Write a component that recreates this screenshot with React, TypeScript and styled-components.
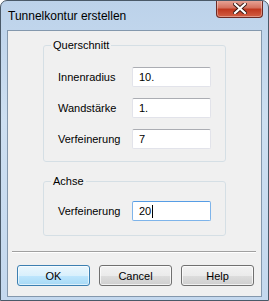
import React from 'react';
import styled, { createGlobalStyle } from 'styled-components';

const GlobalStyle = createGlobalStyle`
  html, body {
    margin: 0;
    padding: 0;
    background: #ffffff;
  }
  * {
    box-sizing: border-box;
  }
`;

const Window = styled.div`
  width: 269px;
  height: 301px;
  display: flex;
  flex-direction: column;
  border: 1px solid #4a5968;
  border-radius: 7px 7px 0 0;
  background: linear-gradient(180deg, #bcd2ea 0%, #cddff1 40%, #c4d8ee 100%);
  overflow: hidden;
  font-family: 'Liberation Sans', Arial, sans-serif;
`;

const TitleBar = styled.div`
  height: 29px;
  display: flex;
  align-items: flex-start;
  justify-content: space-between;
  padding-left: 7px;
`;

const Title = styled.span`
  margin-top: 8px;
  font-size: 12px;
  color: #000000;
`;

const CloseButton = styled.div`
  width: 47px;
  height: 18px;
  margin-top: -1px;
  margin-right: 5px;
  display: flex;
  align-items: center;
  justify-content: center;
  border: 1px solid #6d2a24;
  border-top: none;
  border-radius: 0 0 4px 4px;
  background: linear-gradient(180deg, #e9a99c 0%, #d5725f 45%, #c0381f 55%, #d25f44 100%);
  box-shadow: inset 0 0 0 1px rgba(255, 255, 255, 0.35);
`;

const Client = styled.div`
  flex: 1;
  margin: 0 6px 3px 6px;
  border: 1px solid #8498ad;
  background: #f0f0f0;
  display: flex;
  flex-direction: column;
  padding-top: 7px;
`;

const Group = styled.fieldset<{ $top: number; $bottom: number }>`
  margin: 0 35px;
  border: 1px solid #d5dfe5;
  border-radius: 3px;
  padding: ${p => p.$top}px 0 ${p => p.$bottom}px 14px;
  min-width: 0;
  display: flex;
  flex-direction: column;
  gap: 11px;
  & + & {
    margin-top: 12px;
  }
`;

const Legend = styled.legend`
  margin-left: -7px;
  padding: 0 2px;
  font-size: 11px;
  line-height: 15px;
  color: #000000;
`;

const Row = styled.div`
  display: flex;
  align-items: center;
  height: 20px;
`;

const Label = styled.span`
  width: 74px;
  font-size: 11px;
  color: #000000;
`;

const Input = styled.div<{ $active?: boolean }>`
  width: 79px;
  height: 20px;
  display: flex;
  align-items: center;
  padding-left: 6px;
  font-size: 11px;
  color: #000000;
  background: #ffffff;
  border: 1px solid ${p => (p.$active ? '#7eb4ea' : '#e2e3ea')};
  border-top-color: ${p => (p.$active ? '#569de5' : '#abadb3')};
  border-radius: 2px;
`;

const Caret = styled.span`
  display: inline-block;
  width: 1px;
  height: 13px;
  margin-left: 1px;
  background: #000000;
`;

const Separator = styled.div`
  margin: 15px 5px 0 4px;
  height: 2px;
  border-top: 1px solid #a0a0a0;
  border-bottom: 1px solid #ffffff;
`;

const ButtonRow = styled.div`
  display: flex;
  gap: 9px;
  padding: 12px 0 0 9px;
`;

const Button = styled.div<{ $default?: boolean }>`
  width: 73px;
  height: 21px;
  display: flex;
  align-items: center;
  justify-content: center;
  font-size: 11px;
  color: #000000;
  border-radius: 3px;
  border: 1px solid ${p => (p.$default ? '#3c7fb1' : '#707070')};
  background: ${p =>
    p.$default
      ? 'linear-gradient(180deg, #eaf6fd 0%, #d9f0fc 50%, #bee6fd 51%, #a7d9f5 100%)'
      : 'linear-gradient(180deg, #f2f2f2 0%, #ebebeb 50%, #dddddd 51%, #cfcfcf 100%)'};
  box-shadow: inset 0 0 0 1px ${p => (p.$default ? 'rgba(255,255,255,0.6)' : 'rgba(255,255,255,0.7)')};
`;

const App: React.FC = () => {
  return (
    <Window>
      <GlobalStyle />
      <TitleBar>
        <Title>Tunnelkontur erstellen</Title>
        <CloseButton>
          <svg width="14" height="11" viewBox="0 0 14 11">
            <path d="M2 1 L12 10 M12 1 L2 10" stroke="#3a1a14" strokeWidth="4" strokeLinecap="square" />
            <path d="M2 1 L12 10 M12 1 L2 10" stroke="#ffffff" strokeWidth="2.2" strokeLinecap="square" />
          </svg>
        </CloseButton>
      </TitleBar>
      <Client>
        <Group $top={14} $bottom={12}>
          <Legend>Querschnitt</Legend>
          <Row>
            <Label>Innenradius</Label>
            <Input>10.</Input>
          </Row>
          <Row>
            <Label>Wandstärke</Label>
            <Input>1.</Input>
          </Row>
          <Row>
            <Label>Verfeinerung</Label>
            <Input>7</Input>
          </Row>
        </Group>
        <Group $top={12} $bottom={14}>
          <Legend>Achse</Legend>
          <Row>
            <Label>Verfeinerung</Label>
            <Input $active>
              20<Caret />
            </Input>
          </Row>
        </Group>
        <Separator />
        <ButtonRow>
          <Button $default>OK</Button>
          <Button>Cancel</Button>
          <Button>Help</Button>
        </ButtonRow>
      </Client>
    </Window>
  );
};

export default App;
